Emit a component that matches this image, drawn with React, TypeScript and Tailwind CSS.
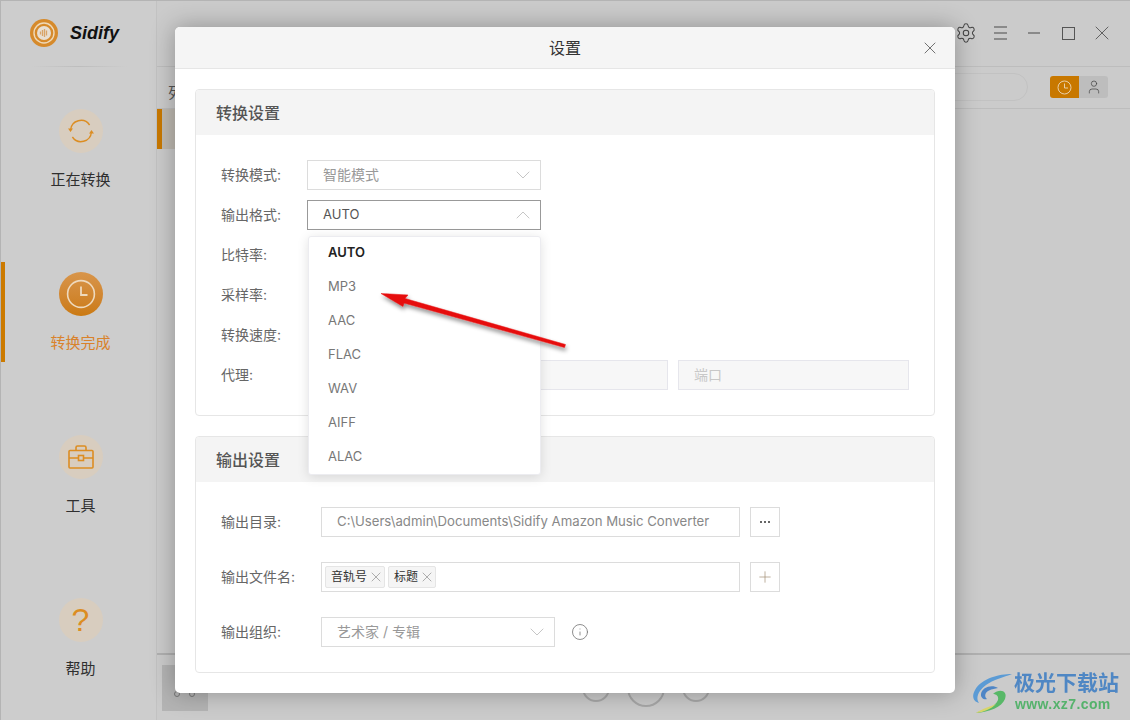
import React from 'react';
import { ChevronDown, ChevronUp, Info, Plus, Settings, User, X } from 'lucide-react';

const Circle: React.FC<{ children: React.ReactNode; active?: boolean }> = ({ children, active }) => (
  <div
    className={`w-11 h-11 rounded-full flex items-center justify-center ${
      active ? 'bg-gradient-to-b from-[#d8954a] to-[#cb7a10]' : 'bg-[#d8cdbf]'
    }`}
  >
    {children}
  </div>
);

const NavItem: React.FC<{ label: string; active?: boolean; children: React.ReactNode }> = ({ label, active, children }) => (
  <div className={`relative h-[100px] pt-[10px] pl-[4px] flex flex-col items-center ${active ? 'text-[#d9822b]' : 'text-[#2f2f2f]'}`}>
    {active && <div className="absolute left-0 top-0 bottom-0 w-[4px] bg-[#cc7a00]" />}
    <Circle active={active}>{children}</Circle>
    <div className="mt-[17px] text-[15px] leading-5">{label}</div>
  </div>
);

const Sidebar = () => (
  <div className="w-[156px] shrink-0 bg-[#cdcdcd] border-r border-[#c2c2c2] flex flex-col">
    <div className="h-[66px] relative flex items-center pl-[29px] gap-[12px] pb-[2px]">
      <svg width="28" height="28" viewBox="0 0 28 28">
        <circle cx="14" cy="14" r="14" fill="#d68a2b" />
        <circle cx="14" cy="14" r="10" fill="none" stroke="#efd9b8" strokeWidth="1.4" />
        <circle cx="14" cy="14" r="7" fill="#e8dfd2" />
        <path d="M10.500 12.500v3M12.500 11v6M14.500 10v8M16.500 11.500v5" stroke="#d8a468" strokeWidth="1.300" />
      </svg>
      <span className="font-['Liberation_Sans',sans-serif] font-bold italic text-[18px] text-[#111]">Sidify</span>
      <div className="absolute bottom-0 left-[30px] w-[96px] h-px bg-gradient-to-r from-transparent via-[#bdbdbd] to-transparent" />
    </div>
    <div className="pt-[32px] flex flex-col gap-[63px]">
      <NavItem label="正在转换">
        <svg width="28" height="28" viewBox="0 0 28 28" fill="none" stroke="#dc8d22" strokeWidth="1.4">
          <path d="M3.600 13a10.400 10.400 0 0 1 19-5" />
          <path d="M24.400 15a10.400 10.400 0 0 1-19 5" />
          <path d="M1 11.500h5l-2.500 3.400zM27 16.500h-5l2.500-3.400z" fill="#dc8d22" stroke="none" />
        </svg>
      </NavItem>
      <NavItem label="转换完成" active>
        <svg width="30" height="30" viewBox="0 0 30 30" fill="none" stroke="#eed9bd" strokeWidth="1.6">
          <circle cx="15" cy="15" r="13.400" />
          <path d="M15 7.500V16h6.500" strokeWidth="1.800" />
        </svg>
      </NavItem>
      <NavItem label="工具">
        <svg width="28" height="26" viewBox="0 0 28 26" fill="none" stroke="#dc8d22" strokeWidth="1.6">
          <rect x="2" y="6.500" width="24" height="17.500" rx="1" />
          <path d="M9 6.500V3.500a1.500 1.500 0 0 1 1.500-1.500h7A1.500 1.500 0 0 1 19 3.500v3" />
          <path d="M2 14h9.500M16.500 14H26" />
          <rect x="11.500" y="11.500" width="5" height="5" />
        </svg>
      </NavItem>
      <NavItem label="帮助">
        <span className="text-[#dc8d22] text-[32px] leading-none font-['Liberation_Sans',sans-serif]">?</span>
      </NavItem>
    </div>
  </div>
);

const WindowButton: React.FC<{ children: React.ReactNode }> = ({ children }) => (
  <div className="w-[34px] flex items-center justify-center">{children}</div>
);

const Backdrop = () => (
  <div className="flex-1 flex flex-col bg-[#cbcbcb] text-[#555]">
    <div className="h-[66px] border-b border-[#bdbdbd] flex items-center justify-end pr-[11px] pb-[1px]">
      <WindowButton>
        <Settings size={22} strokeWidth={1.1} className="text-[#444]" />
      </WindowButton>
      <WindowButton>
        <div className="w-[13px] flex flex-col gap-[4px]">
          <div className="h-[2px] bg-[#8a8a8a]" />
          <div className="h-[2px] bg-[#8a8a8a]" />
          <div className="h-[2px] bg-[#8a8a8a]" />
        </div>
      </WindowButton>
      <WindowButton>
        <div className="w-[12px] h-[2px] bg-[#8a8a8a]" />
      </WindowButton>
      <WindowButton>
        <div className="w-[13px] h-[13px] border border-[#555]" />
      </WindowButton>
      <WindowButton>
        <X size={24} strokeWidth={0.9} className="text-[#555]" />
      </WindowButton>
    </div>
    <div className="h-[42px] border-b border-[#bdbdbd] flex items-center justify-end pr-[22px] pb-[1px]">
      <div className="w-[80px] h-[28px] rounded-r-full border border-[#c2c2c2] mr-[22px]" />
      <div className="flex rounded-[3px] overflow-hidden h-[22px]">
        <div className="w-[29px] bg-[#c87800] flex items-center justify-center">
          <svg width="15" height="15" viewBox="0 0 15 15" fill="none" stroke="#e8cfa8" strokeWidth="1">
            <circle cx="7.500" cy="7.500" r="6.500" />
            <path d="M7.500 3.500V8h3.500" />
          </svg>
        </div>
        <div className="w-[29px] bg-[#bdbdbd] flex items-center justify-center">
          <User size={16} strokeWidth={1.1} className="text-[#444]" />
        </div>
      </div>
    </div>
    <div className="flex-1 relative">
      <div className="absolute left-[11px] top-[-27px] text-[15px] text-[#555]">列</div>
      <div className="h-[40px] w-[18px] bg-[#bfbab2] border-l-[5px] border-[#c87800]" />
    </div>
    <div className="h-[67px] border-t-2 border-[#b0b0b0] flex items-center pl-[5px] relative">
      <div className="relative w-[46px] h-[46px] bg-[#b4b4b4]">
        <div className="absolute left-[12px] top-[26px] w-[6px] h-[6px] rounded-full border border-[#777]" />
        <div className="absolute left-[27px] top-[26px] w-[6px] h-[6px] rounded-full border border-[#777]" />
      </div>
      <div className="absolute left-[425px] top-[19px] w-[28px] h-[28px] rounded-full border-2 border-[#a8a8a8]" />
      <div className="absolute left-[470px] top-[14px] w-[38px] h-[38px] rounded-full border-2 border-[#a8a8a8]" />
      <div className="absolute left-[525px] top-[19px] w-[28px] h-[28px] rounded-full border-2 border-[#a8a8a8]" />
    </div>
  </div>
);

const Select: React.FC<{ value?: string; open?: boolean; width: string }> = ({ value, open, width }) => (
  <div
    className={`${width} h-[30px] shrink-0 border flex items-center justify-between pl-[15px] pr-[5px] bg-white ${
      open ? 'border-[#999] text-[#555] text-[13px]' : 'border-[#dcdcdc] text-[#999] text-[14px]'
    }`}
  >
    <span className={open ? '' : 'pb-[2px]'}>{value}</span>
    {open ? (
      <ChevronUp size={24} strokeWidth={0.8} className="text-[#b8b8b8]" />
    ) : (
      <ChevronDown size={24} strokeWidth={0.8} className="text-[#b8b8b8]" />
    )}
  </div>
);

const Row: React.FC<{ label: string; labelWidth: string; children?: React.ReactNode }> = ({ label, labelWidth, children }) => (
  <div className="flex items-center h-[30px]">
    <div className={`${labelWidth} shrink-0 pb-[2px] text-[14px] text-[#666]`}>{label}</div>
    {children}
  </div>
);

const Section: React.FC<{ title: string; children: React.ReactNode }> = ({ title, children }) => (
  <div className="border border-[#e6e6e6] rounded-[4px]">
    <div className="h-[45px] bg-[#f4f4f4] rounded-t-[4px] flex items-center pl-[20px] text-[16px] font-medium text-[#555]">{title}</div>
    {children}
  </div>
);

const formats = ['AUTO', 'MP3', 'AAC', 'FLAC', 'WAV', 'AIFF', 'ALAC'];

const Dropdown = () => (
  <div className="absolute left-[1px] top-[36px] w-[233px] h-[239px] bg-white rounded-[3px] border border-[#ececf0] shadow-[0_2px_12px_rgba(0,0,0,0.12)] z-10">
    <div className="-mt-[1px]">
      {formats.map((f, i) => (
        <div key={f} className={`h-[34px] flex items-center pl-[19px] text-[13px] ${i === 0 ? 'text-[#222] font-semibold' : 'text-[#777]'}`}>
          {f}
        </div>
      ))}
    </div>
  </div>
);

const Tag: React.FC<{ label: string }> = ({ label }) => (
  <div className="h-[22px] flex items-center gap-[1px] pl-[5px] bg-[#f5f5f5] border border-[#e5e5e5] rounded-[2px] text-[12px] text-[#333]">
    {label}
    <X size={16} strokeWidth={1} className="text-[#888]" />
  </div>
);

const SquareButton: React.FC<{ children: React.ReactNode }> = ({ children }) => (
  <div className="w-[30px] h-[30px] ml-[10px] border border-[#dcdcdc] flex items-center justify-center">{children}</div>
);

const SettingsModal = () => (
  <div className="absolute left-[174px] top-[26px] w-[780px] h-[666px] bg-white rounded-[5px] shadow-[0_0_24px_rgba(0,0,0,0.3)] overflow-hidden">
    <div className="h-[42px] bg-[#f5f5f5] border-b border-[#e6e6e6] relative flex items-center justify-center text-[16px] text-[#333]">
      设置
      <X size={20} strokeWidth={1} className="absolute right-[15px] top-[11px] text-[#555]" />
    </div>
    <div className="px-[20px] pt-[20px] flex flex-col gap-[20px]">
      <Section title="转换设置">
        <div className="pl-[25px] pt-[25px] pb-[25px] flex flex-col gap-[10px]">
          <Row label="转换模式:" labelWidth="w-[86px]">
            <Select value="智能模式" width="w-[234px]" />
          </Row>
          <Row label="输出格式:" labelWidth="w-[86px]">
            <div className="relative">
              <Select value="AUTO" open width="w-[234px]" />
              <Dropdown />
            </div>
          </Row>
          <Row label="比特率:" labelWidth="w-[86px]" />
          <Row label="采样率:" labelWidth="w-[86px]" />
          <Row label="转换速度:" labelWidth="w-[86px]" />
          <Row label="代理:" labelWidth="w-[86px]">
            <div className="w-[360px] h-[30px] ml-[1px] bg-[#f7f7f7] border border-[#e6e6ec]" />
            <div className="w-[231px] h-[30px] ml-[10px] pb-[2px] bg-[#f7f7f7] border border-[#e6e6ec] flex items-center pl-[15px] text-[14px] text-[#c8c8c8]">
              端口
            </div>
          </Row>
        </div>
      </Section>
      <Section title="输出设置">
        <div className="pl-[25px] pt-[25px] pb-[25px] flex flex-col gap-[25px]">
          <Row label="输出目录:" labelWidth="w-[100px]">
            <div className="w-[419px] h-[30px] border border-[#dcdcdc] flex items-center pl-[15px] text-[13.2px] text-[#888] whitespace-nowrap">
              C:\Users\admin\Documents\Sidify Amazon Music Converter
            </div>
            <SquareButton>
              <span className="flex gap-[2px]">
                <i className="w-[2px] h-[2px] bg-[#666]" />
                <i className="w-[2px] h-[2px] bg-[#666]" />
                <i className="w-[2px] h-[2px] bg-[#666]" />
              </span>
            </SquareButton>
          </Row>
          <Row label="输出文件名:" labelWidth="w-[100px]">
            <div className="w-[419px] h-[30px] border border-[#dcdcdc] flex items-center pl-[3px] gap-[3px]">
              <Tag label="音轨号" />
              <Tag label="标题" />
            </div>
            <SquareButton>
              <Plus size={18} strokeWidth={0.9} className="text-[#a08a70]" />
            </SquareButton>
          </Row>
          <Row label="输出组织:" labelWidth="w-[100px]">
            <Select value="艺术家 / 专辑" width="w-[234px]" />
            <Info size={18} strokeWidth={1.1} className="ml-[16px] text-[#777]" />
          </Row>
        </div>
      </Section>
    </div>
  </div>
);

const RedArrow = () => (
  <svg className="absolute left-[369px] top-[279px] z-20" width="210" height="80" viewBox="370 280 210 80">
    <defs>
      <filter id="arrowShadow" x="-10%" y="-30%" width="120%" height="170%">
        <feDropShadow dx="1" dy="3" stdDeviation="2" floodColor="#000" floodOpacity="0.45" />
      </filter>
    </defs>
    <path
      d="M381 293.500L408 295L405 298.500L565.500 344.500L564.500 347.500L404 303L403 306.500Z"
      fill="#e60f0f"
      stroke="#e60f0f"
      strokeWidth="0.5"
      strokeLinejoin="round"
      filter="url(#arrowShadow)"
    />
  </svg>
);

const Watermark = () => (
  <div className="absolute left-[970px] top-[669px] flex items-center gap-[1px] z-20 blur-[0.3px]">
    <svg width="42" height="42" viewBox="0 0 42 42" fill="none">
      <path d="M41 3C28 3 11 7 4 19C0 26 3 31 8 32C4 27 8 19 15 14C22 9 33 6 41 3Z" fill="#5b9bd5" />
      <path d="M27 17C21 13 11 16 10 23C9.500 27 13 29 16 28C13 26 14 21 18 19.500C21 18 24 18 27 17Z" fill="#4f86c6" />
      <path d="M22 23C29 17 37 20 34 28C31 36 18 41 5 42C15 38 24 36 27 29C28 25 25 23 22 23Z" fill="#58b868" />
      <path d="M5 42C12 37 19 36 25 33C20 38 13 41 5 42Z" fill="#d8d56a" />
    </svg>
    <div className="flex flex-col items-start">
      <div className="text-[21px] leading-[26px] font-bold text-[#4f87c4] whitespace-nowrap">极光下载站</div>
      <div className="text-[14px] leading-[17px] font-semibold text-[#55b26c] font-['Liberation_Sans',sans-serif] tracking-[0.4px] pl-[1px]">www.xz7.com</div>
    </div>
  </div>
);

export default function App() {
  return (
    <div className="relative w-[1130px] h-[720px] overflow-hidden border-t border-l border-[#b4b4b4] flex font-['Inter','Noto_Sans_CJK_SC',sans-serif]">
      <Sidebar />
      <Backdrop />
      <SettingsModal />
      <RedArrow />
      <Watermark />
    </div>
  );
}
